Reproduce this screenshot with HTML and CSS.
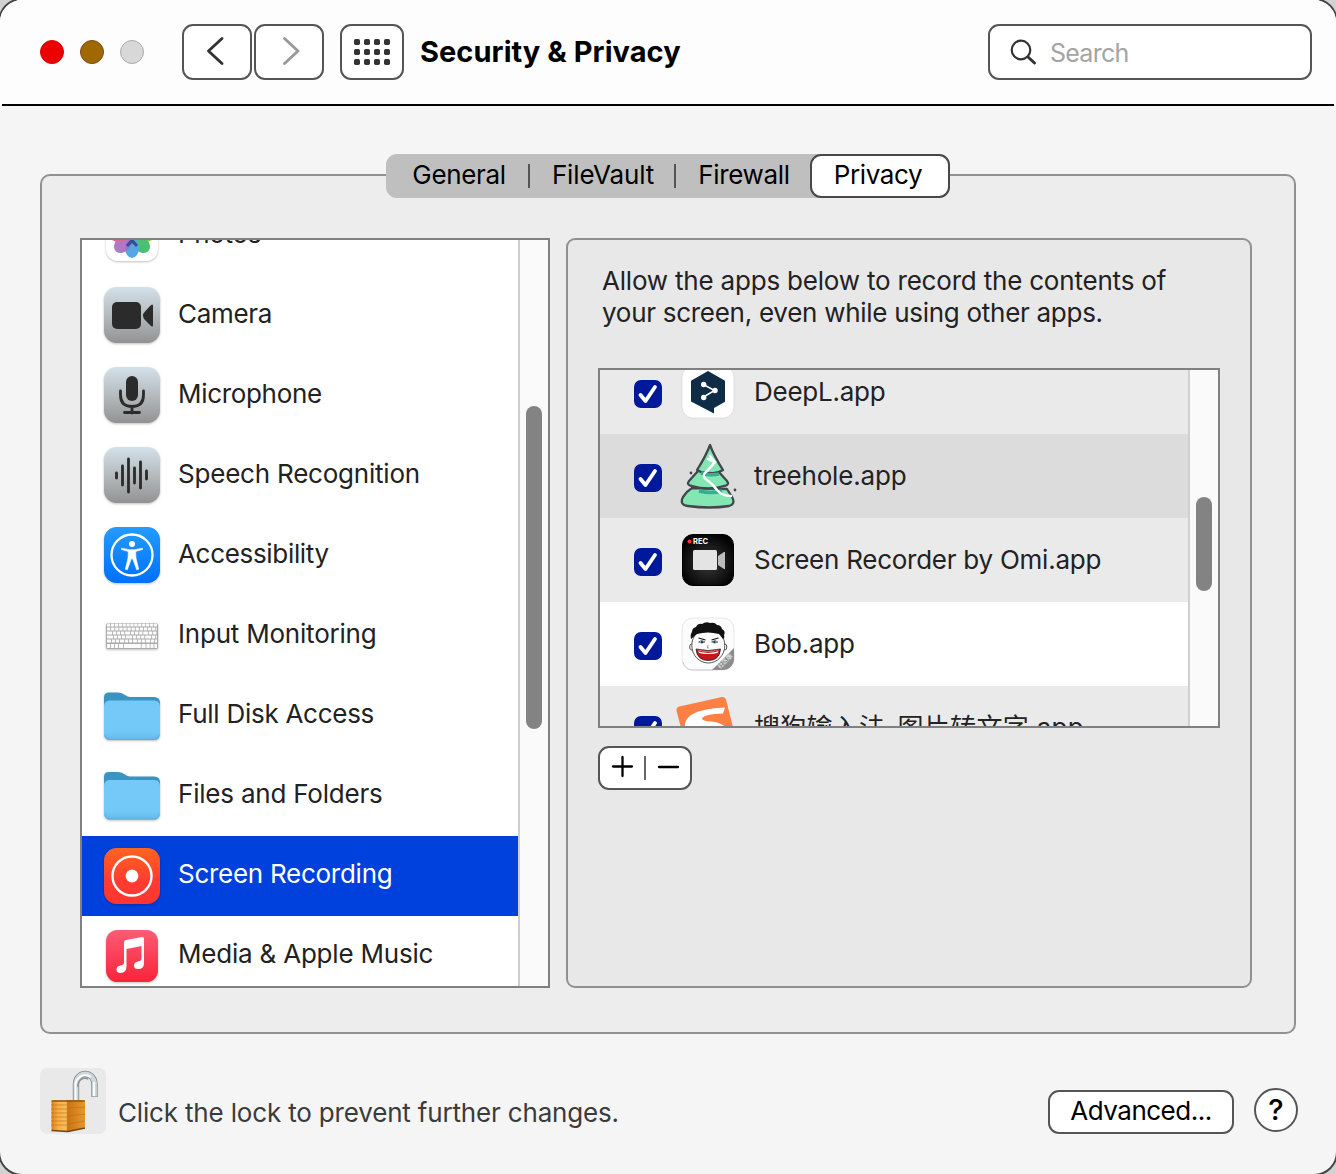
FILE: index.html
```html
<!DOCTYPE html>
<html lang="en">
<head>
<meta charset="utf-8">
<title>Security &amp; Privacy</title>
<link rel="stylesheet" href="styles.css">
</head>
<body>
<svg class="defs" width="0" height="0" aria-hidden="true">
  <defs>
    <linearGradient id="steel" x1="0" y1="0" x2="0" y2="1"><stop offset="0" stop-color="#d3e1e9"/><stop offset=".5" stop-color="#b5bbbe"/><stop offset="1" stop-color="#929292"/></linearGradient>
    <linearGradient id="blue" x1="0" y1="0" x2="0" y2="1"><stop offset="0" stop-color="#249bff"/><stop offset="1" stop-color="#0070ff"/></linearGradient>
    <linearGradient id="orange" x1="0" y1="0" x2="0" y2="1"><stop offset="0" stop-color="#ff6420"/><stop offset=".6" stop-color="#ff3b30"/><stop offset="1" stop-color="#ff3630"/></linearGradient>
    <linearGradient id="pink" x1="0" y1="0" x2="0" y2="1"><stop offset="0" stop-color="#fb5c74"/><stop offset="1" stop-color="#fa233b"/></linearGradient>
    <linearGradient id="folder" x1="0" y1="0" x2="0" y2="1"><stop offset="0" stop-color="#74c9f8"/><stop offset=".8" stop-color="#72c8f7"/><stop offset="1" stop-color="#62b8ea"/></linearGradient>
    <linearGradient id="brass" x1="0" y1="0" x2="1" y2="0"><stop offset="0" stop-color="#d98218"/><stop offset=".2" stop-color="#f7b04a"/><stop offset=".44" stop-color="#f9bd5c"/><stop offset=".48" stop-color="#c87416"/><stop offset="1" stop-color="#e6982f"/></linearGradient>
    <radialGradient id="dark" cx=".5" cy=".55" r=".6"><stop offset="0" stop-color="#3a3a3a"/><stop offset="1" stop-color="#000"/></radialGradient>
    <symbol id="folder-icon" viewBox="0 0 60 60">
      <path d="M2 19V10q0-5 5-5h9q4 0 7 2.500t6 2h23q6 0 6 6v6H2z" fill="#3a94bf"/>
      <rect x="2" y="13" width="56" height="39.500" rx="5.500" fill="url(#folder)"/>
      <path d="M3 47.500q1 4.500 5 4.500h44q4 0 5-4.500" fill="none" stroke="#5cadd9"/>
    </symbol>
    <symbol id="check" viewBox="0 0 28 28">
      <rect width="28" height="28" rx="7" fill="#00189a"/>
      <path d="M6.500 15l5 6L21 7" fill="none" stroke="#fff" stroke-width="3.800" stroke-linecap="round" stroke-linejoin="round"/>
    </symbol>
  </defs>
</svg>
<div class="window">
  <header class="titlebar">
    <div class="lights"><i class="light close"></i><i class="light minimize"></i><i class="light zoom"></i></div>
    <div class="nav">
      <button class="tool" aria-label="Back"><svg width="66" height="52" viewBox="0 0 66 52"><path d="M38 12.500L24.500 25 38 37.500" fill="none" stroke="#333" stroke-width="2.900" stroke-linecap="round" stroke-linejoin="round"/></svg></button>
      <button class="tool" aria-label="Forward"><svg width="66" height="52" viewBox="0 0 66 52"><path d="M28.500 12.500L42 25 28.500 37.500" fill="none" stroke="#999" stroke-width="2.900" stroke-linecap="round" stroke-linejoin="round"/></svg></button>
    </div>
    <button class="tool grid" aria-label="Show all"><svg width="36" height="26" viewBox="0 0 36 26" fill="#333"><g id="dots"><rect width="6" height="6" rx="1.700"/><rect x="10" width="6" height="6" rx="1.700"/><rect x="20" width="6" height="6" rx="1.700"/><rect x="30" width="6" height="6" rx="1.700"/></g><use href="#dots" y="10"/><use href="#dots" y="20"/></svg></button>
    <h1 class="title">Security &amp; Privacy</h1>
    <div class="search"><svg width="28" height="28" viewBox="0 0 28 28" fill="none" stroke="#333"><circle cx="11" cy="11" r="9.300" stroke-width="2.200"/><path d="M18 18l6.500 6" stroke-width="3" stroke-linecap="round"/></svg><span>Search</span></div>
  </header>

  <main class="group">
    <nav class="tabs">
      <span class="tab general">General</span><i></i><span class="tab vault">FileVault</span><i></i><span class="tab fire">Firewall</span><span class="tab active">Privacy</span>
    </nav>
    <div class="panes">
      <section class="sidebar">
        <ul class="services">
          <li><svg class="icon" viewBox="0 0 60 60"><rect x="4" y="4" width="52" height="52" rx="12" fill="#fff"/>
            <g transform="translate(30 30)"><ellipse cy="-13" rx="7" ry="10" fill="#f8a52c"/><ellipse cy="-13" rx="7" ry="10" fill="#d6cc2d" transform="rotate(45)"/><ellipse cy="-13" rx="7" ry="10" fill="#99c83d" transform="rotate(90)"/><ellipse cy="-13" rx="7.500" ry="10" fill="#4cbf72" transform="rotate(135)"/><ellipse cy="-13" rx="7" ry="10" fill="#55a6e4" transform="rotate(180)"/><ellipse cy="-13" rx="7.500" ry="10" fill="#a56cc0" fill-opacity=".9" transform="rotate(225)"/><ellipse cy="-13" rx="7" ry="10" fill="#df6796" transform="rotate(270)"/><ellipse cy="-13" rx="7" ry="10" fill="#ee6841" transform="rotate(315)"/><path d="M0 3l-6 7 2 2 4-4 4 4 2-2z" fill="#374c94"/></g></svg><span class="w-photos">Photos</span></li>
          <li><svg class="icon" viewBox="0 0 60 60"><rect x="2" y="2" width="56" height="56" rx="12.500" fill="url(#steel)"/><rect x="10" y="17" width="29" height="27" rx="5" fill="#2b2b2b"/><path d="M41 30.500q0-2 2-4l5-5.500q3-3 3 0v19q0 3-3 0l-5-5q-2-2-2-4.500z" fill="#2b2b2b"/></svg><span class="w-camera">Camera</span></li>
          <li><svg class="icon" viewBox="0 0 60 60"><rect x="2" y="2" width="56" height="56" rx="12.500" fill="url(#steel)"/><rect x="24" y="11" width="12" height="25" rx="6" fill="#2b2b2b"/><path d="M18.500 26v4q0 11.500 11.500 11.500T41.500 30v-4M30 42v6M22.500 47.500h15" fill="none" stroke="#2b2b2b" stroke-width="2.800" stroke-linecap="round"/></svg><span class="w-mic">Microphone</span></li>
          <li><svg class="icon" viewBox="0 0 60 60"><rect x="2" y="2" width="56" height="56" rx="12.500" fill="url(#steel)"/><path d="M14.500 28v5M20.500 21v19M26.500 14v33M32.500 23v15M38.500 17v26M44.500 26v8" stroke="#2b2b2b" stroke-width="2.800" stroke-linecap="round"/></svg><span class="w-speech">Speech Recognition</span></li>
          <li><svg class="icon" viewBox="0 0 60 60"><rect x="2" y="2" width="56" height="56" rx="12.500" fill="url(#blue)"/><circle cx="30" cy="30" r="20.500" fill="none" stroke="#fff" stroke-width="2.300"/><circle cx="30" cy="19" r="3" fill="#fff"/><path d="M19.500 23.200l8 1.500h5l8-1.500v1.300l-6.800 2q0 7 1 9.500l2 8.200-2 .6-4-11h-1.400l-4 11-2-.6 2-8.200q1-2.500 1-9.500l-6.800-2z" fill="#fff" stroke="#fff" stroke-width=".6"/></svg><span class="w-access">Accessibility</span></li>
          <li><svg class="icon" viewBox="0 0 60 60"><rect x="4" y="18" width="52" height="26" rx="2" fill="#aaa"/><g stroke="#fcfcfc" stroke-width="3" fill="none"><path d="M5 20h50" stroke-dasharray="3.200 .7"/><path d="M5 24h50" stroke-dasharray="3.300 .8"/><path d="M5 28h50" stroke-dasharray="5 .8 3.300 .8 3.300 .8 3.300 .8"/><path d="M5 32h50" stroke-dasharray="6 .8 3.300 .8 3.300 .8 3.300 .8"/><path d="M5 36h50" stroke-dasharray="4 .8 3.300 .8 3.300 .8"/><path d="M5 41h50" stroke-width="4" stroke-dasharray="3 .8 3.300 .8 3.300 .8 4 .8 17 .8 4 .8 3.300 .8"/></g></svg><span class="w-input">Input Monitoring</span></li>
          <li><svg class="icon"><use href="#folder-icon" y="2.500"/></svg><span class="w-disk">Full Disk Access</span></li>
          <li><svg class="icon"><use href="#folder-icon" y="2"/></svg><span class="w-files">Files and Folders</span></li>
          <li class="selected"><svg class="icon" viewBox="0 0 60 60"><rect x="2" y="2" width="56" height="56" rx="12.500" fill="url(#orange)"/><circle cx="30" cy="30" r="19.500" fill="none" stroke="#fff" stroke-width="2.400"/><circle cx="30" cy="30" r="6.400" fill="#fff"/></svg><span class="w-screen">Screen Recording</span></li>
          <li class="last"><svg class="icon" viewBox="0 0 60 60"><rect x="4" y="4" width="52" height="52" rx="11.500" fill="url(#pink)"/><path d="M22 16.500q0-2 2-2.400l16-3q2-.4 2 1.500V37q0 6-6 6-4 0-4-3.500 0-3.300 4-4 3.500-.6 3.500-2.500V20L24.500 23v17.500q0 6.500-6 6.500-4 0-4-3.500 0-3.300 4-4 3.500-.6 3.500-2.500z" fill="#fff"/></svg><span class="w-media">Media &amp; Apple Music</span></li>
        </ul>
        <div class="track"><i class="thumb side-thumb"></i></div>
      </section>

      <section class="detail">
        <p class="hint"><span class="w-h1">Allow the apps below to record the contents of</span><br><span class="w-h2">your screen, even while using other apps.</span></p>
        <div class="table">
          <ul class="apps">
            <li><svg class="box"><use href="#check"/></svg><svg class="app" viewBox="0 0 64 70"><rect x="6" y="9" width="52" height="52" rx="11" fill="#fff" stroke="#d5d5d5" stroke-width=".7"/><path d="M32 14l17 9.700v21L38 51v5.500L15 44.500V23.700z" fill="#0f2b46"/><path d="M27.500 27.500l11 6-11 6.500" fill="none" stroke="#fff" stroke-width="1.500"/><g fill="#fff"><circle cx="27.700" cy="27.500" r="2.700"/><circle cx="39" cy="33.500" r="2.700"/><circle cx="27.700" cy="40.500" r="2.700"/></g></svg><span class="w-deepl">DeepL.app</span></li>
            <li class="dim"><svg class="box"><use href="#check"/></svg><svg class="app" viewBox="0 0 64 70"><g fill="#84e6b2" stroke="#42474e" stroke-width="2.300" stroke-linejoin="round" stroke-linecap="round"><path d="M16 47q-5 3-9 9-4 8 5 9 22 3 41 0 7-2 3-9l-5-8z"/><path d="M22 30l-9 10q-3 4 3 5 16 5 32 0 6-1 3-5l-9-10z"/><path d="M34 4q-4 11-13 25 6 4 13 3 7 1 13-3Q38 15 34 4z"/></g><path d="M25 32q8 3 18 1M23 50q12 3 23 0" fill="none" stroke="#32ae91" stroke-width="3.500"/><path d="M34 15l5 6q-4 5-9 10-5 4 1 8 6 4 10 10 5 6 14 6M39 21l-7-3" fill="none" stroke="#fff" stroke-width="2.500" stroke-linecap="round"/><circle cx="15" cy="32" r="1.400" fill="#42474e"/><circle cx="59" cy="49" r="1.400" fill="#42474e"/></svg><span class="w-tree">treehole.app</span></li>
            <li><svg class="box"><use href="#check"/></svg><svg class="app" viewBox="0 0 64 70"><rect x="6.500" y="9.500" width="51" height="51" rx="10.500" fill="url(#dark)" stroke="#000"/><circle cx="13.500" cy="16.500" r="2" fill="#f33"/><text x="17" y="19.300" class="rec">REC</text><rect x="17" y="25" width="24" height="20" rx="1.500" fill="#e4e4e4"/><path d="M42 31l6-4h1v17h-1l-6-4z" fill="#bcbcbc"/></svg><span class="w-omi">Screen Recorder by Omi.app</span></li>
            <li class="white"><svg class="box"><use href="#check"/></svg><svg class="app" viewBox="0 0 64 70"><clipPath id="bob"><rect x="6" y="9" width="52" height="52" rx="11"/></clipPath><rect x="6" y="9" width="52" height="52" rx="11" fill="#fcfcfc" stroke="#e8e8e8"/><path d="M7 53q2 8 10 8h20" fill="none" stroke="#ccc"/><g><ellipse cx="15.500" cy="38" rx="1.800" ry="3" fill="#fff" stroke="#555"/><ellipse cx="49" cy="38" rx="1.800" ry="3" fill="#fff" stroke="#555"/><ellipse cx="32.300" cy="36.500" rx="16.500" ry="17.500" fill="#fff" stroke="#444" stroke-width=".9"/><path d="M15 30q-1-5 1-7 0-4 4-5 2-4 6-3 4-3 8-1 5-1 7 2 4 0 5 4 4 2 2 6 1 3-1 4l-4-5q-11-3-22 0z" fill="#111"/><path d="M22.500 29l7 2M42.500 29l-7 2" stroke="#111" stroke-width="1.300"/><path d="M22.500 33q3.500-3 6.500 0-3 2-6.500 0M35.500 33q3.500-3 6.500 0-3.500 2-6.500 0" fill="#fff" stroke="#444" stroke-width=".7"/><circle cx="26" cy="33" r="1.200" fill="#246"/><circle cx="38.500" cy="33" r="1.200" fill="#246"/><path d="M32 36l-.500 3h1.500" stroke="#999" fill="none"/><path d="M20 40q12 3 24.500 0-1 11.500-12.200 11.500T20 40z" fill="#c8141a" stroke="#222" stroke-width=".8"/><path d="M21.500 41q11 2.500 21.500 0l-1.500 3q-9 2-18.500 0z" fill="#fff"/><path d="M21 41.500q11 3.500 22.500 0" fill="none" stroke="#b1161a" stroke-width="1.300"/></g><g clip-path="url(#bob)"><path d="M35 62l24-24v24z" fill="#8c8c8c"/><text x="44" y="60" transform="rotate(-45 44 60)" class="ribbon">社区版</text></g></svg><span class="w-bob">Bob.app</span></li>
            <li><svg class="box"><use href="#check"/></svg><svg class="app" viewBox="0 0 64 70"><path d="M.5 17.500Q0 14.500 3.500 13.500L46 4q3-.5 4 2.500L66 70H14z" fill="#fc8044"/><path d="M49 14.500Q26 15 15 22q-7 5-6 13h42q-7-6-16-6.500-9-.5-9-3 2-4.500 21-5z" fill="#fff"/></svg><span class="w-sogou">搜狗输入法-图片转文字.app</span></li>
          </ul>
          <div class="track"><i class="thumb table-thumb"></i></div>
        </div>
        <div class="plusminus"><svg width="90" height="40" viewBox="0 0 90 40" stroke="#000" stroke-width="2.300" stroke-linecap="round"><path d="M13 18.500h19M22.500 9v19M59 19h19"/><path d="M45 8v24" stroke="#555" stroke-width="1.800" stroke-linecap="butt"/></svg></div>
      </section>
    </div>
  </main>

  <footer class="footer">
    <div class="lock"><svg width="66" height="66" viewBox="0 0 66 66"><g fill="none"><path d="M36 33V16a9.200 10 0 0 1 18.500 0V29" stroke="#7e898f" stroke-width="6.400"/><path d="M36 33V16a9.200 10 0 0 1 18.500 0V28.500" stroke="#ced7dc" stroke-width="4.800"/><path d="M35.500 33V16a9.700 10.500 0 0 1 15-7M54 14v14" stroke="#fff" stroke-width="1.800"/><path d="M38 19a7 8 0 0 1 10-8" stroke="#8d989e" stroke-width="1.500"/></g><path d="M11.500 33.500l4-1.500h26l3.500 1.500v26L28 63.500l-16.500-1z" fill="url(#brass)"/><path d="M11 37h16M11 41h16M11 45h16M11 49h16M11 53h16M11 57h16M28 40l17-1M28 48l17-2M28 56l17-3" stroke="#bd6d12" stroke-width="1" opacity=".6"/><path d="M11.500 33H45" stroke="#8d5414" stroke-width="1.400"/><path d="M11.500 62.500l16.500 1L45 60" fill="none" stroke="#79410b" stroke-width="1.400"/></svg></div>
    <span class="note w-lock">Click the lock to prevent further changes.</span>
    <button class="advanced"><span class="w-adv">Advanced...</span></button>
    <button class="help">?</button>
  </footer>
</div>
</body>
</html>
```
FILE: styles.css
```css
* { box-sizing: border-box; }
body { margin: 0; background: #d2d2d2; font: 26px/32px Inter, "Noto Sans CJK SC", sans-serif; color: #222; overflow: hidden; }
ul { list-style: none; margin: 0; padding: 0; }
button { font: inherit; color: #000; padding: 0; }
span { white-space: nowrap; }
svg { display: block; flex: none; }
.defs { position: absolute; }

.window { width: 1336px; height: 1174px; border-radius: 22px; background: #f5f5f5; box-shadow: 0 0 0 2px #444; overflow: hidden; display: flex; flex-direction: column; }
.titlebar { height: 106px; flex: none; margin: 0 2px; padding: 2px 22px 0 38px; border-bottom: 2px solid #000; background: #fdfdfd; display: flex; align-items: center; box-shadow: -2px 0 #fdfdfd, 2px 0 #fdfdfd; }
.titlebar { padding-top: 0; }
.lights { display: flex; gap: 16px; }
.light { width: 24px; height: 24px; border-radius: 50%; border: 1.500px solid; }
.close { background: #ec0000; border-color: #d90000; }
.minimize { background: #a06800; border-color: #7c4b0c; }
.zoom { background: #d8d8d8; border-color: #aaa; }
.nav { display: flex; gap: 2px; margin-left: 38px; }
.tool { width: 70px; height: 56px; border: 2px solid #555; border-radius: 11px; background: #fff; display: flex; align-items: center; justify-content: center; }
.grid { width: 64px; margin-left: 16px; padding-bottom: 1px; }
.title { margin: 0 0 0 16px; font-size: 29px; line-height: 36px; font-weight: 700; color: #000; letter-spacing: .05px; white-space: nowrap; }
.search { width: 324px; height: 56px; margin-left: auto; border: 2px solid #555; border-radius: 11px; background: #fff; display: flex; align-items: center; gap: 12px; padding: 2px 0 0 20px; color: #a4a4a4; font-size: 25px; letter-spacing: -.75px; }

.group { width: 1256px; height: 860px; margin: 68px 40px 0; flex: none; border: 2px solid #919191; border-radius: 10px; background: #ededed; display: flex; flex-direction: column; align-items: center; }
.tabs { width: 564px; height: 44px; margin-top: -22px; flex: none; background: #bfbfbf; border-radius: 11px; display: flex; align-items: center; color: #000; }
.tabs i { width: 2px; height: 24px; background: #555; }
.tab { text-align: center; padding-bottom: 2px; letter-spacing: -.35px; }
.general { width: 142px; padding-left: 4px; }
.vault { width: 144px; padding-left: 2px; letter-spacing: -.15px; }
.fire { width: 134px; padding-left: 2px; }
.active { width: 140px; height: 44px; border: 2px solid #484848; border-radius: 11px; background: #fff; padding: 3px 4px 0 0; }
.panes { display: flex; align-self: flex-start; gap: 16px; margin: 40px 0 0 38px; }
.sidebar { width: 470px; height: 750px; border: 2px solid #808080; background: #fff; overflow: hidden; display: flex; }
.services { width: 436px; margin-top: -44px; }
.services li { height: 80px; padding: 0 0 4px 20px; display: flex; align-items: center; gap: 16px; }
.services .icon { width: 60px; height: 60px; margin-top: 2px; filter: drop-shadow(0 1px 1px rgba(0,0,0,.25)); }
.services .selected { background: #0040dd; color: #fff; }
.services .selected .icon, .services .last .icon { margin-top: 4px; }
.track { width: 30px; border-left: 2px solid #cfcfcf; background: #fafafa; padding-left: 6px; }
.thumb { display: block; width: 16px; border-radius: 8px; background: #838383; }
.side-thumb { height: 323px; margin-top: 166px; }
.detail { width: 686px; height: 750px; border: 2px solid #919191; border-radius: 9px; background: #e8e8e8; padding: 25px 30px; }
.hint { margin: 0 0 39px 4px; }
.table { width: 622px; height: 360px; border: 2px solid #808080; background: #fff; overflow: hidden; display: flex; }
.apps { width: 588px; margin-top: -20px; }
.apps li { height: 84px; display: flex; align-items: center; padding-left: 34px; background: #eaeaea; }
.apps .dim { background: #dcdcdc; }
.apps .white { background: #fff; }
.box { width: 28px; height: 28px; margin-top: 4px; }
.app { width: 64px; height: 70px; margin: 0 14px; }
.table-thumb { height: 94px; margin-top: 127px; }
.rec { font: 700 7.500px Inter, sans-serif; fill: #fff; }
.ribbon { font: 6px "Noto Sans CJK SC", sans-serif; fill: #fff; letter-spacing: 0; }
.plusminus { width: 94px; height: 44px; margin-top: 18px; border: 2px solid #555; border-radius: 11px; background: #fff; }

.footer { display: flex; align-items: flex-start; padding: 34px 38px 0 40px; }
.lock { width: 66px; height: 66px; border-radius: 7px; background: #e9e9e9; }
.note { margin: 29px auto 0 12px; color: #3b3b3b; }
.advanced { width: 186px; height: 44px; margin-top: 22px; border: 2px solid #555; border-radius: 11px; background: #fff; padding-bottom: 3px; line-height: 32px; }
.help { width: 44px; height: 44px; margin: 20px 0 0 20px; border: 2px solid #555; border-radius: 50%; background: #fff; font-size: 29px; font-weight: 500; }

/* Tracking per label */
.w-photos, .w-camera, .w-mic, .w-access { letter-spacing: -.32px; }
.w-speech, .w-input, .w-files, .w-media { letter-spacing: -.21px; }
.w-disk, .w-screen { letter-spacing: -.27px; }
.w-h1 { letter-spacing: -.2px; }
.w-h2 { letter-spacing: -.28px; }
.w-deepl, .w-omi, .w-bob { letter-spacing: -.25px; }
.w-tree, .w-lock { letter-spacing: -.17px; }
.w-sogou { letter-spacing: .27px; }
.w-adv { letter-spacing: -.5px; }
```
